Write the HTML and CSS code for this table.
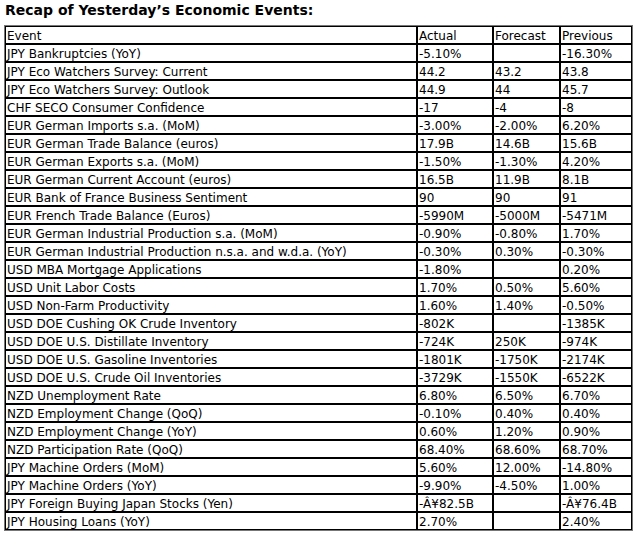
FILE: index.html
```html
<!DOCTYPE html>
<html>
<head>
<meta charset="utf-8">
<link rel="stylesheet" href="styles.css">
</head>
<body>
<h1 class="title">Recap of Yesterday’s Economic Events:</h1>
<table class="recap">
<colgroup><col class="c-event"><col class="c-actual"><col class="c-fc"><col class="c-prev"></colgroup>
<tr><td>Event</td><td>Actual</td><td>Forecast</td><td>Previous</td></tr>
<tr><td>JPY Bankruptcies (YoY)</td><td>-5.10%</td><td></td><td>-16.30%</td></tr>
<tr><td>JPY Eco Watchers Survey: Current</td><td>44.2</td><td>43.2</td><td>43.8</td></tr>
<tr><td>JPY Eco Watchers Survey: Outlook</td><td>44.9</td><td>44</td><td>45.7</td></tr>
<tr><td>CHF SECO Consumer Confidence</td><td>-17</td><td>-4</td><td>-8</td></tr>
<tr><td>EUR German Imports s.a. (MoM)</td><td>-3.00%</td><td>-2.00%</td><td>6.20%</td></tr>
<tr><td>EUR German Trade Balance (euros)</td><td>17.9B</td><td>14.6B</td><td>15.6B</td></tr>
<tr><td>EUR German Exports s.a. (MoM)</td><td>-1.50%</td><td>-1.30%</td><td>4.20%</td></tr>
<tr><td>EUR German Current Account (euros)</td><td>16.5B</td><td>11.9B</td><td>8.1B</td></tr>
<tr><td>EUR Bank of France Business Sentiment</td><td>90</td><td>90</td><td>91</td></tr>
<tr><td>EUR French Trade Balance (Euros)</td><td>-5990M</td><td>-5000M</td><td>-5471M</td></tr>
<tr><td>EUR German Industrial Production s.a. (MoM)</td><td>-0.90%</td><td>-0.80%</td><td>1.70%</td></tr>
<tr><td>EUR German Industrial Production n.s.a. and w.d.a. (YoY)</td><td>-0.30%</td><td>0.30%</td><td>-0.30%</td></tr>
<tr><td>USD MBA Mortgage Applications</td><td>-1.80%</td><td></td><td>0.20%</td></tr>
<tr><td>USD Unit Labor Costs</td><td>1.70%</td><td>0.50%</td><td>5.60%</td></tr>
<tr><td>USD Non-Farm Productivity</td><td>1.60%</td><td>1.40%</td><td>-0.50%</td></tr>
<tr><td>USD DOE Cushing OK Crude Inventory</td><td>-802K</td><td></td><td>-1385K</td></tr>
<tr><td>USD DOE U.S. Distillate Inventory</td><td>-724K</td><td>250K</td><td>-974K</td></tr>
<tr><td>USD DOE U.S. Gasoline Inventories</td><td>-1801K</td><td>-1750K</td><td>-2174K</td></tr>
<tr><td>USD DOE U.S. Crude Oil Inventories</td><td>-3729K</td><td>-1550K</td><td>-6522K</td></tr>
<tr><td>NZD Unemployment Rate</td><td>6.80%</td><td>6.50%</td><td>6.70%</td></tr>
<tr><td>NZD Employment Change (QoQ)</td><td>-0.10%</td><td>0.40%</td><td>0.40%</td></tr>
<tr><td>NZD Employment Change (YoY)</td><td>0.60%</td><td>1.20%</td><td>0.90%</td></tr>
<tr><td>NZD Participation Rate (QoQ)</td><td>68.40%</td><td>68.60%</td><td>68.70%</td></tr>
<tr><td>JPY Machine Orders (MoM)</td><td>5.60%</td><td>12.00%</td><td>-14.80%</td></tr>
<tr><td>JPY Machine Orders (YoY)</td><td>-9.90%</td><td>-4.50%</td><td>1.00%</td></tr>
<tr><td>JPY Foreign Buying Japan Stocks (Yen)</td><td>-Â¥82.5B</td><td></td><td>-Â¥76.4B</td></tr>
<tr><td>JPY Housing Loans (YoY)</td><td>2.70%</td><td></td><td>2.40%</td></tr>
</table>
</body>
</html>
```
FILE: styles.css
```css
html, body {
  margin: 0;
  background: #ffffff;
}
body {
  padding: 1px 4px 0 4px;
  font-family: "DejaVu Sans", Verdana, sans-serif;
  color: #000;
}
.title {
  font-size: 14px;
  line-height: 18px;
  font-weight: bold;
  margin: 0 0 6px 0;
  padding-left: 1px;
}
.recap {
  border-collapse: separate;
  border-spacing: 0;
  border: 1px solid #777;
  table-layout: fixed;
  width: 629px;
  font-size: 12px;
}
.c-event { width: 412px; }
.c-actual { width: 76px; }
.c-fc { width: 67px; }
.c-prev { width: 72px; }
.recap td {
  border: 1px solid #000;
  padding: 2px 1px 0 1px;
  height: 14px;
  line-height: 14px;
  white-space: nowrap;
  overflow: hidden;
  vertical-align: middle;
}
```
